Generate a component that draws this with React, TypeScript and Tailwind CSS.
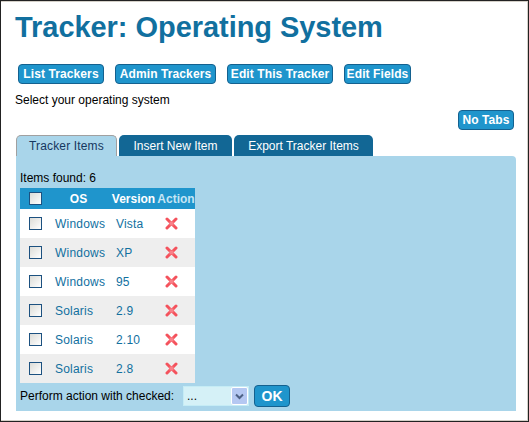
const rows = [
  ['Windows', 'Vista'],
  ['Windows', 'XP'],
  ['Windows', '95'],
  ['Solaris', '2.9'],
  ['Solaris', '2.10'],
  ['Solaris', '2.8'],
];

const buttonClass =
  'h-[20px] whitespace-nowrap rounded-[4px] border border-[#14618f] bg-[#1f95cc] text-[12px] leading-[17px] font-bold tracking-[0.1px] text-white';

function CheckBox() {
  return (
    <span className="block h-[13px] w-[13px] border border-[#1c5180] bg-gradient-to-br from-[#dcdcd7] to-white" />
  );
}

function RemoveIcon() {
  return (
    <svg width="13" height="13" viewBox="0 0 13 13" className="block">
      <path d="M2 2L11 11M11 2L2 11" stroke="#f4525c" strokeWidth="3" strokeLinecap="round" />
      <rect x="4.5" y="4.5" width="4" height="4" fill="#f98088" />
    </svg>
  );
}

export default function App() {
  return (
    <div className="flex h-[422px] w-[529px] flex-col overflow-hidden border border-[#222] bg-white font-['Liberation_Sans',Arial,sans-serif] text-[12px] text-black shadow-[inset_-1px_-1px_0_#d4d0c8,inset_0_1px_0_#d4d0c8]">
      {/* Title */}
      <h1 className="mt-[9px] ml-[14px] text-[29px] leading-[34px] font-bold tracking-[-0.05px] whitespace-nowrap text-[#11709f]">
        Tracker: Operating System
      </h1>

      {/* Nav buttons */}
      <div className="mt-[20px] ml-[17px] flex gap-[11px]">
        <button className={`${buttonClass} w-[86px]`}>List Trackers</button>
        <button className={`${buttonClass} w-[101px]`}>Admin Trackers</button>
        <button className={`${buttonClass} w-[106px]`}>Edit This Tracker</button>
        <button className={`${buttonClass} w-[67px]`}>Edit Fields</button>
      </div>

      <p className="mt-[9px] ml-[14px] leading-[14px]">Select your operating system</p>

      <div className="mt-[3px] mr-[14px] flex justify-end">
        <button className={`${buttonClass} w-[56px]`}>No Tabs</button>
      </div>

      {/* Tabs */}
      <div className="mt-[5px] ml-[15px] flex h-[21px] gap-[2px]">
        <div className="flex w-[101px] items-center justify-center rounded-t-[5px] border border-b-0 border-[#a0a0a0] bg-[#a9d5ea] tracking-[0.15px] text-[#16375f]">
          Tracker Items
        </div>
        <div className="flex w-[113px] items-center justify-center rounded-t-[5px] bg-[#126795] text-white">
          Insert New Item
        </div>
        <div className="flex w-[139px] items-center justify-center rounded-t-[5px] bg-[#126795] text-white">
          Export Tracker Items
        </div>
      </div>

      {/* Panel */}
      <div className="ml-[15px] h-[255px] w-[500px] rounded-tr-[4px] bg-[#a9d5ea] pt-[14px] pl-[4px]">
        <div className="h-[18px] leading-[16px]">Items found: 6</div>
        <table className="w-[175px] table-fixed border-collapse">
          <thead>
            <tr className="h-[21px] bg-[#1f95cc] font-bold text-white">
              <th className="w-[27px] pl-[9px]">
                <CheckBox />
              </th>
              <th className="w-[63px]">OS</th>
              <th className="w-[47px]">Version</th>
              <th className="w-[38px] text-[#c5e6f5]">Action</th>
            </tr>
          </thead>
          <tbody>
            {rows.map(([os, version], i) => (
              <tr key={i} className={`h-[29px] text-[#11709f] ${i % 2 === 0 ? 'bg-white' : 'bg-[#eeeeee]'}`}>
                <td className="pl-[9px]">
                  <CheckBox />
                </td>
                <td className="pl-[8px] tracking-[0.2px]">{os}</td>
                <td className="pl-[6px] tracking-[0.2px]">{version}</td>
                <td className="pl-[8px]">
                  <RemoveIcon />
                </td>
              </tr>
            ))}
          </tbody>
        </table>

        {/* Bulk action */}
        <div className="mt-[2px] flex h-[22px] items-center">
          <span className="w-[156px] whitespace-nowrap">Perform action with checked:</span>
          <div className="ml-[7px] flex h-[20px] w-[66px] items-center justify-between border border-[#c5ecf5] bg-[#d5f1f7] pl-[3px]">
            <span>...</span>
            <span className="flex h-[18px] w-[17px] items-center justify-center rounded-[2px] border border-white bg-[#b5c8f2]">
              <svg width="9" height="7" viewBox="0 0 9 7">
                <path d="M1 1.5L4.5 5L8 1.5" fill="none" stroke="#4d6185" strokeWidth="2" />
              </svg>
            </span>
          </div>
          <button className="ml-[5px] h-[22px] w-[36px] rounded-[4px] border border-[#14618f] bg-[#1f95cc] text-[14px] font-bold text-white">
            OK
          </button>
        </div>
      </div>
    </div>
  );
}
